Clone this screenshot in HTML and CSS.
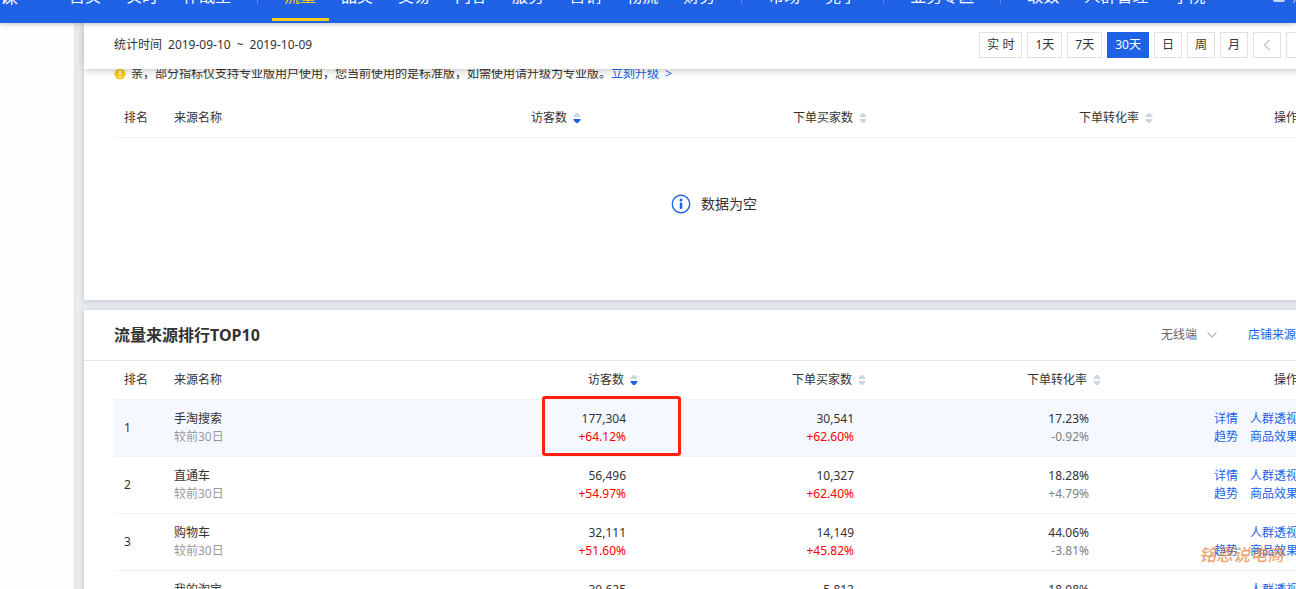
FILE: index.html
```html
<!DOCTYPE html>
<html lang="zh-CN">
<head>
<meta charset="utf-8">
<title>流量来源排行</title>
<link rel="stylesheet" href="styles.css">
</head>
<body>
<svg class="defs" aria-hidden="true">
  <symbol id="sort" viewBox="0 0 8 12"><path class="up" d="M.5 5V4L3 1H5L7.500 4V5Z"/><path class="down" d="M.5 7V8L3 11H5L7.500 8V7Z"/></symbol>
</svg>
<header class="topbar">
  <span class="brand">谋</span>
  <nav class="nav">
    <a href="#">首页</a><a href="#">实时</a><a href="#">作战室</a><i class="sep"></i>
    <a href="#" class="active">流量</a><a href="#">品类</a><a href="#">交易</a><a href="#">内容</a><a href="#">服务</a><a href="#">营销</a><a href="#">物流</a><a href="#">财务</a><i class="sep"></i>
    <a href="#">市场</a><a href="#">竞争</a><i class="sep"></i>
    <a href="#">业务专区</a><i class="sep"></i>
    <a href="#">取数</a><a href="#">人群管理</a><a href="#">学院</a>
  </nav>
  <a href="#" class="message"><svg width="14" height="14" viewBox="0 0 14 14"><rect x="1" y="2" width="12" height="11" rx="2" fill="currentColor"/></svg>消息</a>
</header>
<div class="layout">
  <aside class="side"></aside>
  <main class="main">
    <div class="workspace">
      <div class="datebar">
        <div class="period"><span>统计时间</span><time>2019-09-10</time><span>~</span><time>2019-10-09</time></div>
        <div class="ranges">
          <button>实 时</button><button>1天</button><button>7天</button><button class="on">30天</button><button>日</button><button>周</button><button>月</button>
          <button class="arrow" aria-label="上一段"><svg width="8" height="12" viewBox="0 0 8 12"><path d="M6.500 1L1.500 6L6.500 11" fill="none" stroke="currentColor" stroke-width="1.200"/></svg></button>
          <button class="arrow" aria-label="下一段"><svg width="8" height="12" viewBox="0 0 8 12"><path d="M1.500 1L6.500 6L1.500 11" fill="none" stroke="currentColor" stroke-width="1.200"/></svg></button>
        </div>
      </div>
      <section class="card first">
        <p class="notice"><svg width="12" height="12" viewBox="0 0 12 12"><circle cx="6" cy="6" r="5.500" fill="#f5cb1d"/><path d="M6 2.500V6.800M6 8V9.500" stroke="#fff" stroke-width="1.500"/></svg><span>亲，部分指标仅支持专业版用户使用，您当前使用的是标准版，如需使用请升级为专业版。<a href="#">立刻升级 &nbsp;&gt;</a></span></p>
        <table class="grid overview">
          <thead><tr><th class="c-rank">排名</th><th>来源名称</th><th class="num c-visit">访客数<svg class="sort desc"><use href="#sort"/></svg></th><th class="num c-buy">下单买家数<svg class="sort"><use href="#sort"/></svg></th><th class="num c-rate">下单转化率<svg class="sort"><use href="#sort"/></svg></th><th class="num c-ops">操作</th></tr></thead>
        </table>
        <div class="empty"><svg width="20" height="20" viewBox="0 0 20 20"><circle cx="10" cy="10" r="8.700" fill="none" stroke="#2062e6" stroke-width="1.400"/><circle cx="10" cy="6" r="1.500" fill="#2062e6"/><rect x="8.700" y="8.500" width="2.600" height="6.500" rx="1.200" fill="#2062e6"/></svg>数据为空</div>
      </section>
      <section class="card">
        <div class="card-head">
          <h2>流量来源排行TOP10</h2>
          <div class="tools">
            <label class="terminal"><select aria-label="终端"><option>无线端</option></select><svg width="10" height="6" viewBox="0 0 10 6"><path d="M.5 .5L5 5L9.500 .5" fill="none" stroke="#b5b5b5" stroke-width="1.100"/></svg></label>
            <a href="#">店铺来源 &gt;</a>
          </div>
        </div>
        <table class="grid top">
          <thead><tr><th class="c-rank">排名</th><th>来源名称</th><th class="num c-visit">访客数<svg class="sort desc"><use href="#sort"/></svg></th><th class="num c-buy">下单买家数<svg class="sort"><use href="#sort"/></svg></th><th class="num c-rate">下单转化率<svg class="sort"><use href="#sort"/></svg></th><th class="num c-ops">操作</th></tr></thead>
          <tbody>
            <tr class="hover"><td>1</td><td>手淘搜索<small>较前30日</small></td><td class="num marked">177,304<small class="rise">+64.12%</small><span class="mark"></span></td><td class="num">30,541<small class="rise">+62.60%</small></td><td class="num">17.23%<small>-0.92%</small></td><td class="ops"><div><a href="#">详情</a><a href="#">人群透视</a></div><div><a href="#">趋势</a><a href="#">商品效果</a></div></td></tr>
            <tr><td>2</td><td>直通车<small>较前30日</small></td><td class="num">56,496<small class="rise">+54.97%</small></td><td class="num">10,327<small class="rise">+62.40%</small></td><td class="num">18.28%<small>+4.79%</small></td><td class="ops"><div><a href="#">详情</a><a href="#">人群透视</a></div><div><a href="#">趋势</a><a href="#">商品效果</a></div></td></tr>
            <tr><td>3</td><td>购物车<small>较前30日</small></td><td class="num">32,111<small class="rise">+51.60%</small></td><td class="num">14,149<small class="rise">+45.82%</small></td><td class="num">44.06%<small>-3.81%</small></td><td class="ops"><div><a href="#">人群透视</a></div><div><a href="#">趋势</a><a href="#">商品效果</a></div></td></tr>
            <tr><td>4</td><td>我的淘宝<small>较前30日</small></td><td class="num">30,625</td><td class="num">5,812</td><td class="num">18.98%</td><td class="ops"><div><a href="#">人群透视</a></div><div><a href="#">趋势</a><a href="#">商品效果</a></div></td></tr>
          </tbody>
        </table>
      </section>
    </div>
  </main>
</div>
<div class="watermark">铭恩说电商</div>
</body>
</html>
```
FILE: styles.css
```css
* { box-sizing: border-box; }
body {
  margin: 0;
  height: 100vh;
  overflow: hidden;
  display: flex;
  flex-direction: column;
  background: #e9ecf1;
  color: #333;
  font: 12px/18px "Noto Sans", "Noto Sans CJK SC", sans-serif;
}
a { color: #2062e6; text-decoration: none; }
.defs { position: absolute; width: 0; height: 0; }

.topbar {
  position: relative;
  z-index: 3;
  display: flex;
  align-items: flex-end;
  flex: none;
  height: 23px;
  padding-bottom: 2px;
  background: #2062e6;
  box-shadow: 0 1px 5px rgba(0, 0, 0, .25);
  clip-path: inset(0 0 -10px 0);
  color: #fff;
  font-size: 16px;
  line-height: 50px;
  white-space: nowrap;
}
.brand { width: 57px; font-size: 18px; }
.nav { display: flex; align-items: flex-end; flex: 1; }
.nav a { height: 50px; padding: 0 13px 0 12px; color: #fff; }
.nav .active { color: #f5cb1d; border-bottom: 3px solid #f5cb1d; }
.sep { width: 1px; height: 32px; margin: 0 14px 17px 13px; background: #5c8ef0; }
.message { display: flex; align-items: center; gap: 6px; width: 24px; color: #c3d5fa; font-size: 14px; }
.message svg { flex: none; }

.layout { display: flex; flex: 1; min-height: 0; }
.side { width: 75px; background: #fdfdfe; border-right: 1px solid #e0e3e8; }
.main { flex: 1; min-width: 0; overflow: hidden; padding-left: 9px; }
.workspace { margin-right: -30px; }

.datebar {
  position: relative;
  z-index: 2;
  display: flex;
  align-items: center;
  justify-content: space-between;
  height: 46px;
  padding: 0 12px 2px 30px;
  background: #fff;
  box-shadow: 0 1px 8px rgba(0, 0, 0, .25);
}
.period { display: flex; gap: 6px; }
.ranges { display: flex; gap: 5px; }
.ranges button {
  height: 26px;
  min-width: 28px;
  padding: 0 7px;
  border: 1px solid #e2e2e2;
  background: #fff;
  color: #333;
  font: inherit;
  white-space: nowrap;
}
.ranges .on { background: #2062e6; border-color: #2062e6; color: #fff; }
.ranges .arrow { display: flex; align-items: center; justify-content: center; color: #c4c4c4; }

.card { background: #fff; box-shadow: 0 1px 6px rgba(0, 0, 0, .18); }
.card + .card { margin-top: 10px; }
.first { padding-top: 1px; height: 231px; }
.notice { display: flex; align-items: center; gap: 5px; margin: -5px 0 16px 30px; }

.grid { width: calc(100% - 48px); margin-left: 30px; table-layout: fixed; border-collapse: separate; border-spacing: 0; }
.grid th { height: 39px; padding: 0 10px; font-weight: 400; text-align: left; border-bottom: 1px solid #f0f0f0; white-space: nowrap; }
.grid td { height: 57px; padding: 10px; border-bottom: 1px solid #f0f0f0; }
.grid th.num, .ops { text-align: right; }
.grid td.num { padding-right: 22px; text-align: right; vertical-align: top; }
.c-rank { width: 50px; }
.overview .c-visit { width: 200px; }
.overview .c-buy, .overview .c-rate { width: 286px; }
.overview .c-ops { width: 145px; }
.top .c-visit { width: 200px; }
.top .c-buy { width: 228px; }
.top .c-rate { width: 235px; }
.top .c-ops { width: 197px; }
.sort { width: 8px; height: 12px; margin-left: 6px; vertical-align: -2px; }
.desc { color: #2062e6; }
.up { fill: #cbd8e1; }
.down { fill: currentColor; }
.sort:not(.desc) { color: #cbd8e1; }
.grid small { display: block; color: #999; font-size: 12px; }
.grid td.num small { color: #808080; }
.grid td.num .rise { color: #f00; }
.hover td { background: #f5f9ff; }
.ops a { margin-left: 12px; }
.marked { position: relative; }
.mark { position: absolute; left: 94px; top: -4px; width: 139px; height: 60px; border: 3px solid #ff2010; border-radius: 3px; }

.empty { display: flex; align-items: center; justify-content: center; gap: 10px; height: 132px; padding-left: 18px; font-size: 14px; }
.card-head { display: flex; align-items: center; justify-content: space-between; height: 51px; padding: 0 20px 0 30px; border-bottom: 1px solid #e5e5e5; }
h2 { margin: 0; font-size: 16px; line-height: 24px; }
.tools { display: flex; align-items: center; gap: 31px; }
.terminal { display: flex; align-items: center; gap: 9px; }
.terminal select { appearance: none; border: 0; padding: 0; background: none; color: #666; font: inherit; }
.watermark {
  position: absolute;
  right: 12px;
  bottom: 22px;
  z-index: 4;
  color: #e0792b;
  opacity: .65;
  font: italic 500 17px/26px "Noto Sans CJK SC", sans-serif;
}
```
